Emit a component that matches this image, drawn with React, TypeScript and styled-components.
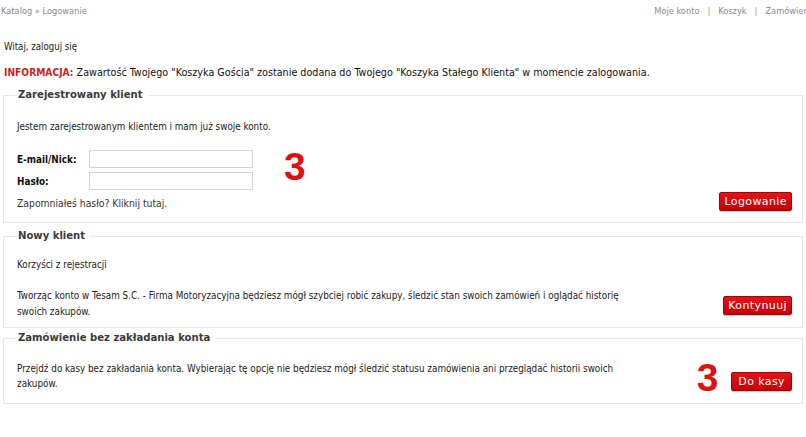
import styled, { createGlobalStyle } from "styled-components";

const GlobalStyle = createGlobalStyle`
  html, body {
    margin: 0;
    padding: 0;
    background: #ffffff;
    overflow: hidden;
  }
  body {
    font-family: "DejaVu Sans Condensed", "DejaVu Sans", sans-serif;
    font-size: 9.8px;
    color: #222222;
  }
`;

const TopBar = styled.div`
  display: flex;
  align-items: center;
  height: 21px;
  font-size: 9.2px;
  color: #8a8a8a;
  white-space: nowrap;
`;

const Crumbs = styled.div`
  padding-left: 1px;
`;

const TopNav = styled.div`
  margin-left: auto;
  margin-right: -10px;
  display: flex;
  gap: 8px;
`;

const Sep = styled.span`
  color: #9a9a9a;
`;

const Page = styled.div`
  padding: 0 3px;
`;

const Greeting = styled.div`
  padding: 18px 0 0 1px;
  height: 16px;
  line-height: 16px;
  font-size: 9.6px;
  color: #222;
`;

const Info = styled.div`
  margin-top: 10px;
  padding-left: 1px;
  line-height: 16px;
  font-size: 10.7px;
  color: #111;
`;

const InfoLabel = styled.span`
  color: #d01c1c;
  font-weight: bold;
  font-size: 10.2px;
`;

const Box = styled.fieldset<{ $top: number }>`
  margin: ${(p) => p.$top}px 0 0 0;
  padding: 0 10px 0 13px;
  border: 1px solid #e6e6e6;
  min-width: 0;
`;

const Legend = styled.legend`
  margin-left: 0;
  padding: 0 6px 0 1px;
  font-size: 11.2px;
  line-height: 14px;
  font-weight: bold;
  color: #3a3a3a;
`;

const Row = styled.div<{ $align: string }>`
  display: flex;
  align-items: ${(p) => p.$align};
`;

const Text = styled.div<{ $width: number }>`
  flex: 0 0 ${(p) => p.$width}px;
  line-height: 16px;
  width: ${(p) => p.$width}px;
`;

const Para = styled.p<{ $mt: number; $lh?: number }>`
  margin: ${(p) => p.$mt}px 0 0 0;
  line-height: ${(p) => p.$lh ?? 16}px;
`;

const FormGrid = styled.div`
  display: grid;
  grid-template-columns: 72px 164px;
  row-gap: 4px;
  align-items: center;
  margin-top: 15px;
`;

const Label = styled.label`
  font-weight: bold;
  font-size: 9.9px;
  color: #111;
`;

const Input = styled.input`
  box-sizing: border-box;
  width: 164px;
  height: 18px;
  border: 1px solid #d4d4d4;
  background: #fff;
  padding: 0 3px;
  font: inherit;
  outline: none;
`;

const Forgot = styled.div`
  margin-top: 5px;
  line-height: 16px;
  font-size: 10.3px;
  color: #333;
`;

const BigThree = styled.div<{ $mr?: number; $ml?: number; $mt?: number; $mb?: number }>`
  font-family: "Liberation Sans", Arial, sans-serif;
  font-weight: bold;
  font-size: 39px;
  line-height: 30px;
  color: #dd1111;
  margin: ${(p) => `${p.$mt ?? 0}px ${p.$mr ?? 0}px ${p.$mb ?? 0}px ${p.$ml ?? 0}px`};
`;

const Button = styled.button<{ $mb?: number; $px?: number }>`
  flex-shrink: 0;
  height: 19px;
  margin-bottom: ${(p) => p.$mb ?? 0}px;
  padding: 0 ${(p) => p.$px ?? 4}px;
  border: 1px solid #a80000;
  border-radius: 2px;
  background: linear-gradient(#e4141a, #c40006);
  color: #ffffff;
  font-family: "DejaVu Sans", sans-serif;
  font-size: 11px;
  letter-spacing: 0.4px;
  line-height: 17px;
  box-shadow: 0 1px 1px rgba(0, 0, 0, 0.25);
  cursor: pointer;
`;

const Spacer = styled.div`
  flex: 1;
`;

const BoxEnd = styled.div<{ $h: number }>`
  height: ${(p) => p.$h}px;
`;

export default function App() {
  return (
    <>
      <GlobalStyle />
      <TopBar>
        <Crumbs>Katalog » Logowanie</Crumbs>
        <TopNav>
          <span>Moje konto</span>
          <Sep>|</Sep>
          <span>Koszyk</span>
          <Sep>|</Sep>
          <span>Zamówienia</span>
        </TopNav>
      </TopBar>
      <Page>
        <Greeting>Witaj, zaloguj się</Greeting>
        <Info>
          <InfoLabel>INFORMACJA:</InfoLabel> Zawartość Twojego "Koszyka Gościa" zostanie dodana do
          Twojego "Koszyka Stałego Klienta" w momencie zalogowania.
        </Info>

        <Box $top={7}>
          <Legend>Zarejestrowany klient</Legend>
          <Para $mt={17}>Jestem zarejestrowanym klientem i mam już swoje konto.</Para>
          <Row $align="flex-end">
            <div>
              <Row $align="center">
                <FormGrid>
                  <Label>E-mail/Nick:</Label>
                  <Input type="text" />
                  <Label>Hasło:</Label>
                  <Input type="password" />
                </FormGrid>
                <BigThree $ml={31} $mt={8}>3</BigThree>
              </Row>
              <Forgot>Zapomniałeś hasło? Kliknij tutaj.</Forgot>
            </div>
            <Spacer />
            <Button>Logowanie</Button>
          </Row>
          <BoxEnd $h={11} />
        </Box>

        <Box $top={6}>
          <Legend>Nowy klient</Legend>
          <Para $mt={14}>Korzyści z rejestracji</Para>
          <Row $align="flex-end">
            <Text $width={630}>
              <Para $mt={15}>
                Tworząc konto w Tesam S.C. - Firma Motoryzacyjna będziesz mógł szybciej robić zakupy,
                śledzić stan swoich zamówień i oglądać historię swoich zakupów.
              </Para>
            </Text>
            <Spacer />
            <Button $mb={5}>Kontynuuj</Button>
          </Row>
          <BoxEnd $h={7} />
        </Box>

        <Box $top={3}>
          <Legend>Zamówienie bez zakładania konta</Legend>
          <Row $align="flex-end">
            <Text $width={605}>
              <Para $mt={16} $lh={15}>
                Przejdź do kasy bez zakładania konta. Wybierając tę opcję nie będziesz mógł śledzić
                statusu zamówienia ani przeglądać historii swoich zakupów.
              </Para>
            </Text>
            <Spacer />
            <BigThree $mr={13} $mb={-2}>3</BigThree>
            <Button $px={6}>Do kasy</Button>
          </Row>
          <BoxEnd $h={12} />
        </Box>
      </Page>
    </>
  );
}
